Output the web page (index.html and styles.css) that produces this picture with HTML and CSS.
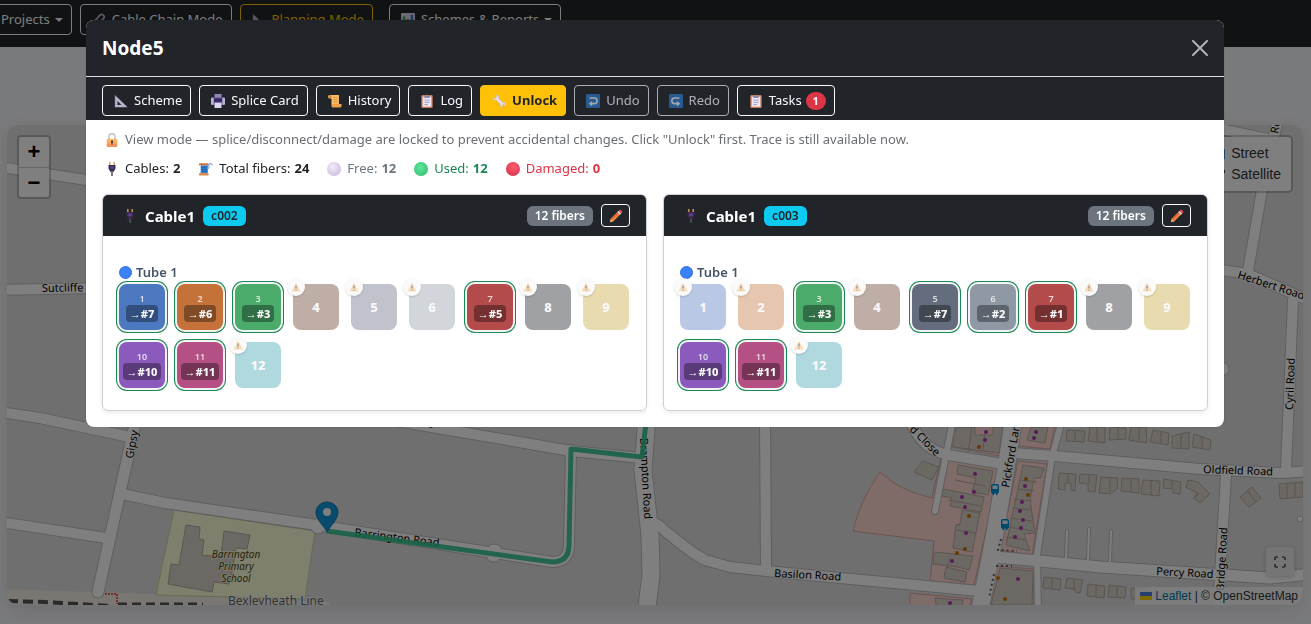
FILE: index.html
```html
<!DOCTYPE html>
<html lang="en">
<head>
<meta charset="utf-8">
<meta name="viewport" content="width=device-width, initial-scale=1">
<title>Node5</title>
<link rel="stylesheet" href="styles.css">
</head>
<body>
<svg class="sprite" aria-hidden="true">
  <symbol id="i-triangle" viewBox="0 0 16 16"><path d="M1 1v14h14.500z" fill="#b9b2cc"/><path d="M4 8v4.500h4.500z" fill="#212529"/><path d="M1 3h1.500M1 6h1.500M1 9h1.500M1 12h1.500" stroke="#8a83a0"/></symbol>
  <symbol id="i-printer" viewBox="0 0 16 16"><rect x="4" y="0" width="8" height="6" fill="#8f86b8"/><rect x="0" y="4" width="16" height="8.500" rx="2" fill="#6a5a9c"/><rect x="0" y="4" width="3" height="8.500" rx="1.500" fill="#b9b2d6"/><rect x="13" y="4" width="3" height="8.500" rx="1.500" fill="#b9b2d6"/><rect x="3.500" y="5" width="9" height="4" fill="#33275c"/><rect x="4" y="10" width="8" height="6" rx="1" fill="#ddd8ec"/></symbol>
  <symbol id="i-scroll" viewBox="0 0 16 16"><path d="M2 1h10.500v11H4V5H2a2 2 0 0 1 0-4z" fill="#fbc069"/><path d="M1 1.500h3v3H1z" fill="#d98a3a"/><path d="M4 11.500h11.500v2A2 2 0 0 1 14 15.500H5a2 2 0 0 1-1-2z" fill="#f0a04c"/><path d="M6 4h5M6 6.500h5M6 9h5" stroke="#d48a3c"/></symbol>
  <symbol id="i-clip" viewBox="0 0 16 16"><rect x="1.500" y="1" width="13" height="15" rx="1.500" fill="#c97a55"/><rect x="3" y="3" width="10" height="11.500" fill="#ece6f6"/><path d="M5 2h2l1-2 1 2h2v2.500H5z" fill="#8b86a4"/><path d="M5 7h6M5 9.500h6M5 12h4" stroke="#9c93bd"/></symbol>
  <symbol id="i-wrench" viewBox="0 0 16 16"><path d="M1 3.500 3.500 5l1.500-1L4.500 1.200C7 1 8.500 3 8 5.500l4.500 4c2-.3 3.500 1.500 3 4L13 12l-1.500 1 .5 2.500c-2-.3-3.300-2-2.800-4L4.800 7.200C2.500 7.500.8 5.800 1 3.500z" fill="#e6dcea" stroke="#b7a7a0" stroke-width=".5"/></symbol>
  <symbol id="i-undo" viewBox="0 0 16 16"><rect width="16" height="16" rx="1.500" fill="#2f79c9"/><path d="M4 4.500h5.500a3 3 0 0 1 0 6.500H6" fill="none" stroke="#e8eef8" stroke-width="1.800"/><path d="M7 8 3 11l4 3z" fill="#e8eef8"/></symbol>
  <symbol id="i-redo" viewBox="0 0 16 16"><rect width="16" height="16" rx="1.500" fill="#2f79c9"/><path d="M12 4.500H6.500a3 3 0 0 0 0 6.500H10" fill="none" stroke="#e8eef8" stroke-width="1.800"/><path d="m9 8 4 3-4 3z" fill="#e8eef8"/></symbol>
  <symbol id="i-lock" viewBox="0 0 16 16"><path d="M4.500 8V4.500a3.500 3.500 0 0 1 7 0V8" fill="none" stroke="#c9c3d4" stroke-width="1.800"/><rect x="2" y="6.500" width="12" height="9.500" rx="1.500" fill="#f9b463"/><path d="M2 12h12v2.500a1.500 1.500 0 0 1-1.500 1.500h-9A1.500 1.500 0 0 1 2 14.500z" fill="#f2945a"/><circle cx="8" cy="10" r="1.400" fill="#4b3a4e"/><path d="M7.400 10h1.200v3.500H7.400z" fill="#4b3a4e"/></symbol>
  <symbol id="i-plug" viewBox="0 0 16 16"><path d="M5.500 0v4M10.500 0v4" stroke="#d79a5b" stroke-width="1.600"/><path d="M4 3.500h8v4L10 11H6L4 7.500z" fill="#3b2a52"/><path d="M6 5h4v3H6z" fill="#5d3f94"/><path d="M8 11v5" stroke="#575062" stroke-width="1.800"/></symbol>
  <symbol id="i-thread" viewBox="0 0 16 16"><rect x="0" y="1.500" width="11" height="2.500" rx="1" fill="#d0713d"/><rect x="2" y="4" width="8" height="8.500" fill="#2e7cd0"/><path d="M2 6.500 10 5.500M2 9l8-1M2 11.500l8-1" stroke="#1b5ca8" stroke-width=".7"/><rect x="0" y="12.500" width="11" height="3" rx="1" fill="#e08a4c"/><path d="M9.500 7.500C14 7 9 3 12 2c2-.5 3 .5 3 2" fill="none" stroke="#7fa7dd" stroke-width="1.300"/></symbol>
  <symbol id="i-pencil" viewBox="0 0 16 16"><path d="M1 15l1-4 8-8 3 3-8 8z" fill="#f98a3c"/><path d="m2 11 8-8 1.500 1.500-8.500 8.500z" fill="#e2653a"/><path d="M1 15l1-4 3 3z" fill="#d9a98c"/><path d="m9.500 3.500 1.500-1.500 3 3-1.500 1.500z" fill="#cfd5e8"/><path d="m11 2 1-1c1-1 4 2 3 3l-1 1z" fill="#f8474f"/></symbol>
  <symbol id="i-warn" viewBox="0 0 16 16"><path d="M8 1 15.500 15H.5z" fill="#f7deba"/><path d="M8 5.500v5" stroke="#8e8794" stroke-width="1.800"/><circle cx="8" cy="12.800" r="1" fill="#8e8794"/></symbol>
  <symbol id="i-link" viewBox="0 0 16 16"><g fill="none" stroke="#b5adc8" stroke-width="2"><path d="m7 9-4 4a2 2 0 0 1-1-3l3-3"/><path d="M6 9a2.500 2.500 0 0 1 0-3l3-3.500a2.800 2.800 0 0 1 4 4L10 9"/></g></symbol>
  <symbol id="i-chart" viewBox="0 0 16 16"><rect width="16" height="16" rx="1" fill="#d9d5e6"/><path d="M2 4h3v12H2z" fill="#34a853"/><path d="M6.500 7h3v9h-3z" fill="#d04a3a"/><path d="M11 2h3v14h-3z" fill="#3b78d8"/></symbol>
  <symbol id="i-bus" viewBox="0 0 8 11"><rect x=".7" y=".7" width="6.600" height="8" rx="1" fill="#e9f4fb" stroke="#0092da" stroke-width="1.400"/><path d="M.7 5h6.600v3.700H.7z" fill="#0092da"/><path d="M1.500 9h1.500v2H1.500zM5 9h1.500v2H5z" fill="#0092da"/></symbol>
</svg>

<div class="page">
  <nav class="navbar" aria-label="Main">
    <button class="btn dropdown" type="button">Projects</button>
    <button class="btn" type="button"><svg class="ico"><use href="#i-link"/></svg>Cable Chain Mode</button>
    <button class="btn btn-warn-outline" type="button"><svg class="ico"><use href="#i-triangle"/></svg>Planning Mode</button>
    <button class="btn dropdown spaced" type="button"><svg class="ico"><use href="#i-chart"/></svg>Schemes &amp; Reports</button>
  </nav>

  <main class="map">
    <svg class="tiles" viewBox="7 125 1296 480" preserveAspectRatio="xMidYMid slice" aria-label="Street map">
      <defs>
        <g id="roads" fill="none" stroke-linecap="round" stroke-linejoin="round">
          <path class="w10" d="M0 167 100 182M0 290 100 288M0 412 40 418 130 437M0 522 106 538M385 419 571 451 642 458"/>
          <path class="w11" d="M136 420 120 492 98 592"/>
          <path class="w10" d="M122 494 165 503 310 524 450 546 552 562Q569 562 569 545L571 450"/>
          <path class="w17" d="M647 415 643 470 650 535 651 575 646 615"/>
          <path class="w10" d="M646 522Q656 521 664 530L680 543Q692 553 705 560L730 567 766 571 979 591M765 415 766 570"/>
          <path class="w10" d="M905 410C915 435 925 450 948 455L1003 464 1013 453 1055 456 1200 469 1282 473 1310 471"/>
          <path class="w6" d="M953 420 935 511M1062 420 1052 457 1037 555 1038 610"/>
          <path class="w17" d="M1014 415 1009 450 995 533 979 615"/>
          <path class="w11" d="M994 557 1040 561 1100 567 1270 578 1310 574"/>
          <path class="w10" d="M1226 475 1218 610M1293 300 1286 470M1279 115 1262 190 1248 271M1215 269 1248 274 1310 301M1215 128 1268 139"/>
          <path class="w2" d="M1067 531 1066 558M1089 529 1088 560M1111 531 1110 562"/>
        </g>
      </defs>
      <rect x="7" y="125" width="1296" height="480" fill="#e0dfdf"/>
      <path d="M0 589 120 593 330 602V610H0z" fill="#f5efe7"/>
      <path d="M8 601 45 602 110 606" fill="none" stroke="#555" stroke-width="4" stroke-dasharray="10 5"/>
      <path d="M118 604h85" stroke="#555" stroke-width="3" stroke-dasharray="9 5"/>
      <path d="M102 594h15v10" fill="none" stroke="#e8605a" stroke-width="2" stroke-dasharray="2 1"/>
      <path d="M174 510 315 531 305 599 156 595z" fill="#fffedb" stroke="#d8d49a"/>
      <path class="bld" d="M186 525 200 527 199 539 204 540 202 555 212 556H221L224 531 250 535 247 549 236 548 232 573 229 584 214 582 212 592 168 584 171 564 179 565z"/>

      <g fill="#ffd6d1" stroke="#dba7a0">
        <path d="M880 472Q898 490 932 498L941 458 1000 468 974 585 930 581 934 541 853 531Q860 500 880 472z"/>
        <path d="M955 420H1004L1000 456 948 446z"/>
        <path d="M1022 420H1056L1050 449 1017 446z"/>
        <path d="M1018 461 1047 464 1032 555 1000 550z"/>
        <path d="M910 593 972 599 968 610H910z"/>
        <path d="M994 566 1034 569 1033 610H986z"/>
      </g>
      <g class="bld">
        <path d="M957 427h18v8h18v-8h10l-4 26-46-6v-12z"/>
        <path d="M958 465 993 471 988 495 972 492 976 478 957 474z"/>
        <path d="M943 489 984 497 981 512 950 506 952 498 942 496z"/>
        <path d="M962 510 980 513 972 552 953 548 956 525 960 524z"/>
        <path d="M934 552 973 556 969 570 958 567 933 564z"/>
        <path d="M946 567 967 572 965 582 944 578z"/>
        <path d="M1023 465 1044 468 1041 478 1034 478 1030 500 1033 520 1035 533 1024 534 1030 551 1006 545z"/>
        <path d="M1031 427h17l-3 16-18-3z"/>
        <path d="M1000 568 1033 571 1032 605H991z"/>
        <path d="M935 598 963 600 961 610H937z"/>
        <path d="M923 461 939 467 932 480 914 472z"/>
        <path d="M1067 430l18 1-1 11-18-1zM1090 427h15v16l-17-2zM1110 427l16 1v11l-17 1zM1131 427h15l1 16-18-3zM1153 430l16 3-1 12-18-3zM1172 436l17-4v17l-17-1zM1194 434l17 6-1 10-18-3z"/>
        <path d="M1059 473l17 1-1 17-4-1v-7h-6v7l-7-1zM1080 474l17 1-2 17-7-1v-7l-9-1zM1101 477l17 1-1 11-7 5-11-1zM1122 478l17 1v14l-18-2zM1143 480l17 1-1 15-18-2zM1164 479l17 3-1 12-7-1v-4l-10-1zM1188 480l10 2 12 12-10 9-6-5 3-5-11-6z"/>
        <path d="M1240 497l12-10 9 11-12 9zM1279 484l24-2v15l-23 2z"/>
        <path d="M1044 577l17 2-1 11-17-2zM1067 578l16 2-3 13-5-1v-3l-10-1zM1088 584l17 2-1 12-17-2zM1109 585l17 2-1 11-17-1zM1131 588h16v11h-16z"/>
      </g>
      <path d="M972 427 968 452M985 430l-2 20M955 480l30 6M948 500l33 6M956 530l20 3M950 558l-3 10M1019 480l18 2M1017 489l17 2M1014 499l18 2M1012 508l19 2M1010 518l22 3M1008 527l25 4M1006 537l20 3M1075 431v11M1097 427v15M1118 428v11M1139 427v15M1161 432v11M1181 433v15M1202 437v12M1068 474v8M1089 475v8M1110 478v14M1131 479v13M1151 481v14M1172 481v8M1199 493l-5 5M1247 490l9 12M1287 484v14M1295 483v14M1052 578v11M1074 580v10M1096 585v12M1117 586v12" stroke="#b5aaa0" fill="none"/>

      <g fill="#fff" stroke="#bdbdbd"><circle cx="318" cy="526" r="8"/><circle cx="494" cy="553" r="9"/><circle cx="1223" cy="369" r="6"/><circle cx="1300" cy="519" r="3"/></g>
      <use href="#roads" class="casing"/>
      <use href="#roads" class="surface"/>
      <g fill="#fff"><circle cx="318" cy="526" r="7"/><circle cx="494" cy="553" r="8"/></g>

      <g fill="#ac39ac"><circle cx="975" cy="474" r="2"/><circle cx="974" cy="492" r="2"/><circle cx="962" cy="497" r="2"/><circle cx="965" cy="507" r="2"/><circle cx="966" cy="533" r="2"/><circle cx="952" cy="561" r="2"/><circle cx="986" cy="432" r="2"/><circle cx="985" cy="440" r="2"/><circle cx="1036" cy="432" r="2"/><circle cx="1034" cy="438" r="2"/><circle cx="1025" cy="486" r="2"/><circle cx="1022" cy="502" r="2"/><circle cx="1020" cy="511" r="2"/><circle cx="1023" cy="520" r="2"/><circle cx="1021" cy="528" r="2"/><circle cx="1015" cy="537" r="2"/><circle cx="1018" cy="579" r="2"/><circle cx="950" cy="603" r="2"/></g>
      <g fill="#c77400"><circle cx="979" cy="447" r="2"/><circle cx="969" cy="516" r="2"/><circle cx="965" cy="549" r="2"/><circle cx="957" cy="553" r="2"/><circle cx="1026" cy="479" r="2"/><circle cx="1028" cy="495" r="2"/><circle cx="1005" cy="599" r="2"/><circle cx="998" cy="578" r="2"/></g>
      <path d="M1001 539 998 550 1017 551M996 566h16M994 574 989 598" fill="none" stroke="#666" stroke-width="2" stroke-dasharray="2 3"/>
      <use href="#i-bus" x="991" y="484" width="8" height="11"/><use href="#i-bus" x="1001" y="519" width="8" height="11"/>

      <g class="label">
        <text transform="translate(42 292) rotate(-1)">Sutcliffe</text>
        <text transform="translate(133 459) rotate(-79)">Gipsy Road</text>
        <text transform="translate(395 422) rotate(9)">Avenue</text>
        <text transform="translate(354 536) rotate(7)">Barrington Road</text>
        <text transform="translate(640 438) rotate(87)">Brampton Road</text>
        <text transform="translate(774 577) rotate(3)">Basilon Road</text>
        <text transform="translate(909 430) rotate(45)">d Close</text>
        <text transform="translate(1009 488) rotate(-80)">Pickford Lane</text>
        <text transform="translate(1203 473) rotate(2)">Oldfield Road</text>
        <text transform="translate(1156 575) rotate(3)">Percy Road</text>
        <text transform="translate(1224 591) rotate(-87)">Bridge Road</text>
        <text transform="translate(1237 278) rotate(18)">Herbert Road</text>
        <text transform="translate(1293 410) rotate(-88)">Cyril Road</text>
        <text transform="translate(1278 134) rotate(-80)">Road</text>
      </g>
      <g class="label school" text-anchor="middle"><text x="236" y="558">Barrington</text><text x="236" y="570">Primary</text><text x="236" y="582">School</text></g>
      <text class="label rail" x="228" y="605">Bexleyheath Line</text>
      <path d="M327 531 552 562Q569 562 569 545L571 449 642 457 647 415" fill="none" stroke="#30c58e" stroke-opacity=".9" stroke-width="5" stroke-linejoin="round"/>
      <path d="M327 532c-2-5-11-12-11-20a11 10 0 0 1 22 0c0 8-9 15-11 20z" fill="#1096d8" stroke="#1577b0"/><circle cx="327" cy="512" r="4" fill="#fff"/>
    </svg>

    <div class="zoom-ctl"><button type="button" aria-label="Zoom in">+</button><button type="button" aria-label="Zoom out">−</button></div>
    <div class="layers">
      <label><input type="radio" name="layer" checked><span class="sw street"></span>Street</label>
      <label><input type="radio" name="layer"><span class="sw sat"></span>Satellite</label>
    </div>
    <button class="full" type="button" aria-label="Full screen"><svg viewBox="0 0 12 12"><path d="M1 4V2q0-1 1-1h2M8 1h2q1 0 1 1v2M11 8v2q0 1-1 1H8M4 11H2q-1 0-1-1V8" fill="none" stroke="#222" stroke-width="1.200"/></svg></button>
    <div class="attrib"><svg class="flag" viewBox="0 0 12 8"><path fill="#4c7be1" d="M0 0h12v4H0z"/><path fill="#ffd500" d="M0 4h12v4H0z"/></svg> <a href="#">Leaflet</a> | © OpenStreetMap</div>
  </main>
</div>

<div class="overlay">
  <section class="modal" role="dialog" aria-labelledby="title">
    <header class="modal-head">
      <h1 id="title">Node5</h1>
      <button class="close" type="button" aria-label="Close"><svg viewBox="0 0 16 16"><path d="M1 1l14 14M15 1 1 15" stroke="#b0b2b4" stroke-width="2" stroke-linecap="round"/></svg></button>
    </header>
    <div class="toolbar">
      <button class="btn" type="button"><svg class="ico"><use href="#i-triangle"/></svg>Scheme</button>
      <button class="btn" type="button"><svg class="ico"><use href="#i-printer"/></svg>Splice Card</button>
      <button class="btn" type="button"><svg class="ico"><use href="#i-scroll"/></svg>History</button>
      <button class="btn" type="button"><svg class="ico"><use href="#i-clip"/></svg>Log</button>
      <button class="btn btn-unlock" type="button"><svg class="ico"><use href="#i-wrench"/></svg>Unlock</button>
      <button class="btn" type="button" disabled><svg class="ico"><use href="#i-undo"/></svg>Undo</button>
      <button class="btn" type="button" disabled><svg class="ico"><use href="#i-redo"/></svg>Redo</button>
      <button class="btn" type="button"><svg class="ico"><use href="#i-clip"/></svg>Tasks<span class="count">1</span></button>
    </div>
    <div class="modal-body">
      <p class="notice"><svg class="ico"><use href="#i-lock"/></svg>View mode — splice/disconnect/damage are locked to prevent accidental changes. Click "Unlock" first. Trace is still available now.</p>
      <div class="stats">
        <span><svg class="ico"><use href="#i-plug"/></svg>Cables: <b>2</b></span>
        <span><svg class="ico"><use href="#i-thread"/></svg>Total fibers: <b>24</b></span>
        <span class="free"><i class="ball"></i>Free: <b>12</b></span>
        <span class="used"><i class="ball"></i>Used: <b>12</b></span>
        <span class="damaged"><i class="ball"></i>Damaged: <b>0</b></span>
      </div>
      <div class="cards">
        <article class="card">
          <header class="card-head"><svg class="ico"><use href="#i-plug"/></svg><h2>Cable1</h2><span class="tag">c002</span><span class="fibers">12 fibers</span><button class="edit" type="button" aria-label="Edit cable"><svg><use href="#i-pencil"/></svg></button></header>
          <div class="card-body">
            <h3 class="tube">Tube 1</h3>
            <div class="chips">
              <button class="chip on blue" type="button"><small>1</small><b>→#7</b></button>
              <button class="chip on orange" type="button"><small>2</small><b>→#6</b></button>
              <button class="chip on green" type="button"><small>3</small><b>→#3</b></button>
              <button class="chip brown-f" type="button">4<i class="warn"><svg><use href="#i-warn"/></svg></i></button>
              <button class="chip slate-f" type="button">5<i class="warn"><svg><use href="#i-warn"/></svg></i></button>
              <button class="chip white-f" type="button">6<i class="warn"><svg><use href="#i-warn"/></svg></i></button>
              <button class="chip on red" type="button"><small>7</small><b>→#5</b></button>
              <button class="chip black-f" type="button">8<i class="warn"><svg><use href="#i-warn"/></svg></i></button>
              <button class="chip yellow-f" type="button">9<i class="warn"><svg><use href="#i-warn"/></svg></i></button>
              <button class="chip on violet" type="button"><small>10</small><b>→#10</b></button>
              <button class="chip on rose" type="button"><small>11</small><b>→#11</b></button>
              <button class="chip aqua-f" type="button">12<i class="warn"><svg><use href="#i-warn"/></svg></i></button>
            </div>
          </div>
        </article>
        <article class="card">
          <header class="card-head"><svg class="ico"><use href="#i-plug"/></svg><h2>Cable1</h2><span class="tag">c003</span><span class="fibers">12 fibers</span><button class="edit" type="button" aria-label="Edit cable"><svg><use href="#i-pencil"/></svg></button></header>
          <div class="card-body">
            <h3 class="tube">Tube 1</h3>
            <div class="chips">
              <button class="chip blue-f" type="button">1<i class="warn"><svg><use href="#i-warn"/></svg></i></button>
              <button class="chip orange-f" type="button">2<i class="warn"><svg><use href="#i-warn"/></svg></i></button>
              <button class="chip on green" type="button"><small>3</small><b>→#3</b></button>
              <button class="chip brown-f" type="button">4<i class="warn"><svg><use href="#i-warn"/></svg></i></button>
              <button class="chip on slate" type="button"><small>5</small><b>→#7</b></button>
              <button class="chip on white" type="button"><small>6</small><b>→#2</b></button>
              <button class="chip on red" type="button"><small>7</small><b>→#1</b></button>
              <button class="chip black-f" type="button">8<i class="warn"><svg><use href="#i-warn"/></svg></i></button>
              <button class="chip yellow-f" type="button">9<i class="warn"><svg><use href="#i-warn"/></svg></i></button>
              <button class="chip on violet" type="button"><small>10</small><b>→#10</b></button>
              <button class="chip on rose" type="button"><small>11</small><b>→#11</b></button>
              <button class="chip aqua-f" type="button">12<i class="warn"><svg><use href="#i-warn"/></svg></i></button>
            </div>
          </div>
        </article>
      </div>
    </div>
  </section>
</div>
</body>
</html>
```

FILE: styles.css
```css
* { box-sizing: border-box; }
body { margin: 0; font: 13px/21px "Noto Sans", sans-serif; color: #212529; background: #f3f4f7; }
button { font: inherit; color: inherit; cursor: pointer; }
h1, h2, h3, p { margin: 0; }
.sprite { position: absolute; width: 0; height: 0; }

.page { display: flex; flex-direction: column; height: 100vh; overflow: hidden; }
.navbar { display: flex; flex: none; gap: 8px; height: 47px; margin-bottom: 78px; padding-top: 4px; background: #212529; white-space: nowrap; }
.btn { display: flex; align-items: center; height: 31px; padding: 0 8px; border: 1px solid #f8f9fa; border-radius: 4px; background: none; color: #f8f9fa; }
.btn:disabled { opacity: .65; }
.ico { flex: none; width: 14px; height: 14px; margin: 0 6px 0 3px; }
.navbar .btn:first-child { margin-left: -8px; }
.navbar .spaced { margin-left: 8px; }
.dropdown::after { content: ""; margin-left: 5px; border: 4px solid transparent; border-top-color: currentColor; border-bottom: 0; }
.btn-warn-outline { border-color: #ffc107; color: #ffc107; }

.map { position: relative; flex: 1; min-height: 0; margin: 0 8px 19px 7px; border-radius: 12px; overflow: hidden; box-shadow: 0 4px 16px rgba(0, 0, 0, .1); }
.tiles { display: block; width: 100%; height: 100%; }
.w2 { --w: 2px; }
.w6 { --w: 6px; }
.w10 { --w: 10px; }
.w11 { --w: 11px; }
.w17 { --w: 17px; }
.casing { --edge: 2px; stroke: #bdbdbd; }
.surface { --edge: 0px; stroke: #fff; }
#roads path { stroke-width: calc(var(--w) + var(--edge)); }
.bld { fill: #d9d0c9; stroke: #b8aca1; }
.label { font: 11px "Noto Sans", sans-serif; fill: #000; stroke: #fff; stroke-width: 2px; stroke-opacity: .7; paint-order: stroke; }
.school { font-size: 10px; font-style: italic; fill: #4a4a10; stroke: #fffedb; }
.rail { font-size: 12px; fill: #666; }

.zoom-ctl { position: absolute; top: 10px; left: 10px; display: flex; flex-direction: column; border: 2px solid rgba(0, 0, 0, .2); border-radius: 4px; background: #fff; background-clip: padding-box; }
.zoom-ctl button { width: 30px; height: 30px; padding: 0; border: 0; background: none; color: #000; font: bold 22px/28px "Liberation Sans", sans-serif; }
.zoom-ctl button + button { border-top: 1px solid #ccc; }
.layers { position: absolute; top: 10px; right: 10px; padding: 6px 10px 6px 6px; border: 2px solid rgba(0, 0, 0, .2); border-radius: 5px; background: #fff; background-clip: padding-box; font: 14px/21px "Liberation Sans", sans-serif; color: #333; }
.layers label { display: flex; align-items: center; }
.layers input { margin: 0 6px; }
.sw { width: 14px; height: 10px; margin-right: 6px; }
.street { background: #3b9bd8; }
.sat { background: linear-gradient(135deg, transparent 40%, #4a3c78 40%, #4a3c78 70%, transparent 70%); }
.full { position: absolute; right: 9px; bottom: 29px; width: 28px; height: 29px; padding: 8px; border: 0; border-radius: 4px; background: #ebebeb; box-shadow: 0 1px 4px rgba(0, 0, 0, .2); }
.full svg { display: block; width: 12px; height: 12px; }
.attrib { position: absolute; right: 0; bottom: 0; padding: 0 5px; background: rgba(255, 255, 255, .8); font: 12px/18px "Liberation Sans", sans-serif; color: #333; }
.attrib a { color: #0078a8; text-decoration: none; }
.flag { width: 12px; height: 8px; }

.overlay { position: fixed; inset: 0; padding: 20px 87px 20px 86px; overflow: auto; background: rgba(0, 0, 0, .5); }
.modal { border-radius: 8px; background: #fff; overflow: hidden; box-shadow: 0 0 1px rgba(0, 0, 0, .5); }
.modal-head { display: flex; justify-content: space-between; align-items: center; height: 57px; padding: 0 16px; border-bottom: 1px solid #dee2e6; background: #212529; color: #fff; }
h1 { font-size: 19px; line-height: 30px; font-weight: 700; }
.close { width: 16px; height: 16px; padding: 0; border: 0; background: none; }
.close svg { display: block; width: 16px; height: 16px; }
.toolbar { display: flex; flex-wrap: wrap; gap: 8px; padding: 8px 16px 4px; background: #212529; }
.btn-unlock { border-color: #ffc107; background: #ffc107; color: #212529; font-weight: 700; }
.count { min-width: 20px; margin-left: 4px; padding: 0 6px; border-radius: 10px; background: #dc3545; font-size: 11px; line-height: 18px; font-weight: 700; text-align: center; }

.modal-body { padding: 8px 16px 16px; }
.notice { display: flex; align-items: center; margin-bottom: 7px; line-height: 23px; color: #6b6e72; }
.stats { display: flex; flex-wrap: wrap; gap: 16px; margin-bottom: 15px; }
.stats span { display: flex; align-items: center; gap: 4px; }
.stats .ico { margin-right: 2px; }
.stats b { font-weight: 700; }
.ball { width: 14px; height: 14px; margin: 0 2px; border-radius: 50%; }
.free { color: #6c757d; }
.free .ball { background: radial-gradient(circle at 40% 35%, #f3ecfa, #c3b0d8); }
.used { color: #198754; }
.used .ball { background: radial-gradient(circle at 45% 40%, #5fe89c, #2bb86a); }
.damaged { color: #dc3545; }
.damaged .ball { background: radial-gradient(circle at 55% 35%, #ff5b6c, #d02d4c); }

.cards { display: grid; grid-template-columns: 1fr 1fr; gap: 16px; }
.card { border: 1px solid #cfd0d1; border-radius: 6px; overflow: hidden; box-shadow: 0 2px 4px rgba(0, 0, 0, .08); }
.card-head { display: flex; align-items: center; gap: 8px; height: 41px; padding: 0 16px; background: #212529; color: #fff; }
.card-head .ico { margin: 0 0 0 4px; }
h2 { font-size: 15px; line-height: 24px; font-weight: 700; }
.tag, .fibers { padding: 0 8px; border-radius: 6px; font-size: 12px; line-height: 20px; font-weight: 600; }
.tag { background: #0dcaf0; color: #212529; }
.fibers { margin-left: auto; background: #6c757d; }
.edit { display: flex; align-items: center; justify-content: center; width: 29px; height: 23px; padding: 0; border: 1px solid #f8f9fa; border-radius: 4px; background: none; }
.edit svg { width: 14px; height: 14px; }
.card-body { padding: 26px 16px 22px; }
.tube { display: flex; align-items: center; gap: 4px; margin-bottom: 2px; font-size: 13px; line-height: 20px; font-weight: 600; color: #475569; }
.tube::before { content: ""; width: 11px; height: 11px; border: 1px solid #2f6fdc; border-radius: 50%; background: #3b82f6; }
.chips { display: flex; flex-wrap: wrap; gap: 12px; margin-right: -8px; }
.chip { position: relative; display: flex; flex-direction: column; align-items: center; justify-content: center; width: 46px; height: 46px; padding: 0; border: 0; border-radius: 8px; color: #f8f8f8; font-size: 13px; line-height: 20px; font-weight: 800; }
.chip.on { box-shadow: 0 0 0 2px #f2f4f4, 0 0 0 3px #198754; }
.chip small { font-size: 9px; line-height: 12px; font-weight: 600; opacity: .8; }
.chip b { padding: 0 4px; border-radius: 4px; background: rgba(0, 0, 0, .35); font-size: 11px; line-height: 17px; font-weight: 800; white-space: nowrap; }
.warn { position: absolute; top: -6px; left: -6px; display: flex; align-items: center; justify-content: center; width: 18px; height: 18px; border-radius: 50%; background: #fafafa; box-shadow: 0 1px 2px rgba(0, 0, 0, .15); }
.warn svg { width: 10px; height: 10px; }
.blue { background: #4c78c0; }
.orange { background: #c47239; }
.green { background: #4aab6b; }
.slate { background: #636d7d; }
.white { background: #8f99a6; }
.red { background: #b34b4b; }
.violet { background: #8b5abd; }
.rose { background: #b45083; }
.blue-f { background: #b8c8e5; }
.orange-f { background: #e7c6b0; }
.brown-f { background: #bfaea5; }
.slate-f { background: #c0c3cc; }
.white-f { background: #d2d5da; }
.black-f { background: #a0a1a5; }
.yellow-f { background: #e9dbb0; }
.aqua-f { background: #afd8df; }
```
